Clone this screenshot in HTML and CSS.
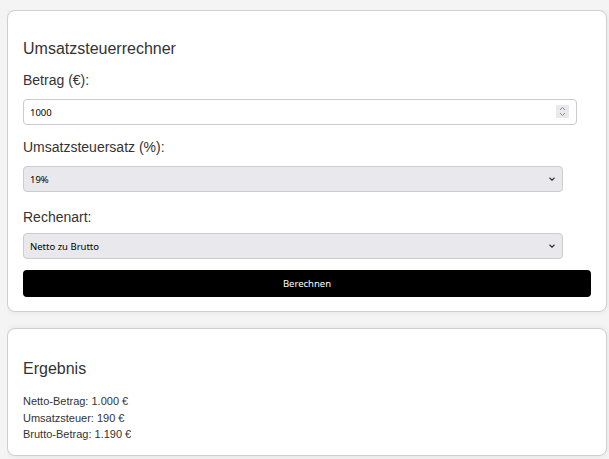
FILE: index.html
```html
<html>
    <head>
        <link rel="stylesheet" href="styles.css">
    </head>
    <body>
        <div class = "card">
            <h2 class = "title">Umsatzsteuerrechner</h2>
            <form class = "calc">
                <label class = "label" for = "betrag">Betrag (€):</label>
                <div class = "amount-wrap">
                    <input class = "field amount" type = "number" id = "betrag" value = "1000">
                    <span class = "spin">
                        <svg width = "7" height = "11" viewBox = "0 0 7 11">
                            <path d = "M1 4 L3.5 1.5 L6 4" fill = "none" stroke = "#8a8a8a" stroke-width = "1"/>
                            <path d = "M1 7 L3.5 9.5 L6 7" fill = "none" stroke = "#8a8a8a" stroke-width = "1"/>
                        </svg>
                    </span>
                </div>
                <label class = "label" for = "satz">Umsatzsteuersatz (%):</label>
                <select class = "field choice" id = "satz">
                    <option>19%</option>
                    <option>7%</option>
                </select>
                <label class = "label label-wide" for = "art">Rechenart:</label>
                <select class = "field choice choice-close" id = "art">
                    <option>Netto zu Brutto</option>
                    <option>Brutto zu Netto</option>
                </select>
                <button class = "submit" type = "button">Berechnen</button>
            </form>
        </div>
        <div class = "card result">
            <h2 class = "title">Ergebnis</h2>
            <div class = "lines">
                <p>Netto-Betrag: 1.000 €</p>
                <p>Umsatzsteuer: 190 €</p>
                <p>Brutto-Betrag: 1.190 €</p>
            </div>
        </div>
    </body>
</html>
```

FILE: styles.css
```css
body{
    margin: 10px 0 0 7px;
    background-color: #f4f4f4;
    font-family: "Liberation Sans", Arial, sans-serif;
    color: #333;
}
.card{
    width: 600px;
    box-sizing: border-box;
    background: #fff;
    border: 1px solid #cfcfcf;
    border-radius: 8px;
    box-shadow: 0 0 6px rgba(0, 0, 0, 0.08);
    padding: 15px 15px 14px 15px;
}
.result{
    margin-top: 16px;
    padding-bottom: 12px;
}
.title{
    margin: 14px 0 0 0;
    font-size: 16px;
    font-weight: normal;
    line-height: 18px;
}
.result .title{
    margin-top: 16px;
}
.calc{
    display: flex;
    flex-direction: column;
    align-items: flex-start;
    margin: 0;
}
.label{
    margin-top: 14px;
    font-size: 14px;
    line-height: 16px;
}
.label-wide{
    margin-top: 17px;
}
.field{
    box-sizing: border-box;
    height: 26px;
    margin-top: 11px;
    border: 1px solid #ccc;
    border-radius: 4px;
    padding: 0 6px;
    font-family: "Noto Sans", sans-serif;
    font-size: 9.5px;
    color: #000;
}
.amount-wrap{
    position: relative;
    margin-top: 11px;
}
.amount{
    display: block;
    width: 554px;
    margin-top: 0;
    background: #fff;
    -moz-appearance: textfield;
}
.amount::-webkit-inner-spin-button,
.amount::-webkit-outer-spin-button{
    -webkit-appearance: none;
    margin: 0;
}
.spin{
    position: absolute;
    right: 8px;
    top: 6px;
    width: 13px;
    height: 13px;
    background: #e9e9ed;
    display: flex;
    align-items: center;
    justify-content: center;
}
.choice{
    width: 540px;
    -webkit-appearance: none;
    appearance: none;
    background-color: #e9e8ed;
    background-image: url("data:image/svg+xml,%3Csvg xmlns='http://www.w3.org/2000/svg' width='6' height='4' viewBox='0 0 6 4'%3E%3Cpath d='M0.5 0.8 L3 3.2 L5.5 0.8' fill='none' stroke='%23333' stroke-width='1.2'/%3E%3C/svg%3E");
    background-repeat: no-repeat;
    background-position: right 7px center;
    background-size: 6px 4px;
}
.choice-close{
    margin-top: 8px;
}
.submit{
    width: 100%;
    height: 27px;
    margin-top: 11px;
    border: none;
    border-radius: 4px;
    background: #000;
    color: #fff;
    font-family: "Noto Sans", sans-serif;
    font-size: 9.5px;
}
.lines{
    margin-top: 15px;
    font-size: 11px;
    line-height: 16.5px;
}
.lines p{
    margin: 0;
}
```
